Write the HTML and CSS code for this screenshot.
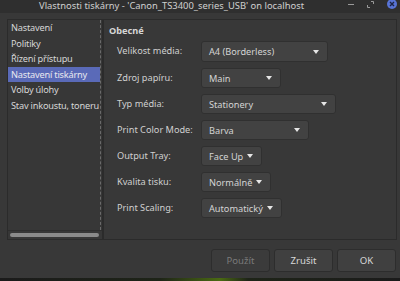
FILE: index.html
```html
<!DOCTYPE html>
<html lang="cs">
<head>
    <meta charset="UTF-8">
    <title>Vlastnosti tiskárny</title>
    <link rel="stylesheet" href="styles.css">
</head>
<body>
    <div class="window">
        <div class="titlebar">
            <div class="title">Vlastnosti tiskárny - 'Canon_TS3400_series_USB' on localhost</div>
            <div class="controls">
                <span class="ctl-min"></span>
                <svg class="ctl-max" width="7" height="7" viewBox="0 0 7 7">
                    <path d="M4 0.5h2.5v2.5M3 6.5H0.5V4" fill="none" stroke="#9a9a9a" stroke-width="1"/>
                </svg>
                <span class="ctl-close">
                    <svg width="6" height="6" viewBox="0 0 6 6">
                        <path d="M1 1L5 5M5 1L1 5" stroke="#1c2447" stroke-width="1.4"/>
                    </svg>
                </span>
            </div>
        </div>

        <div class="main">
            <div class="sidebar">
                <ul class="list">
                    <li>Nastavení</li>
                    <li>Politiky</li>
                    <li>Řízení přístupu</li>
                    <li class="selected">Nastavení tiskárny</li>
                    <li>Volby úlohy</li>
                    <li>Stav inkoustu, toneru</li>
                </ul>
                <div class="hscroll"><div class="thumb"></div></div>
            </div>

            <div class="pane">
                <div class="section">Obecné</div>
                <div class="form">
                    <label>Velikost média:</label>
                    <div class="combo w-a4 first">A4 (Borderless)<span class="arrow"></span></div>

                    <label>Zdroj papíru:</label>
                    <div class="combo w-main">Main<span class="arrow"></span></div>

                    <label>Typ média:</label>
                    <div class="combo w-type">Stationery<span class="arrow"></span></div>

                    <label>Print Color Mode:</label>
                    <div class="combo w-color">Barva<span class="arrow"></span></div>

                    <label>Output Tray:</label>
                    <div class="combo">Face Up<span class="arrow"></span></div>

                    <label>Kvalita tisku:</label>
                    <div class="combo">Normálně<span class="arrow"></span></div>

                    <label>Print Scaling:</label>
                    <div class="combo">Automatický<span class="arrow"></span></div>
                </div>
            </div>
        </div>

        <div class="buttons">
            <button class="btn" disabled>Použít</button>
            <button class="btn">Zrušit</button>
            <button class="btn">OK</button>
        </div>
    </div>
    <div class="desktop"></div>
</body>
</html>
```

FILE: styles.css
```css
* {
    box-sizing: border-box;
}
html, body {
    margin: 0;
    padding: 0;
    width: 400px;
    height: 281px;
    overflow: hidden;
    background: #1d1d1d;
}
body {
    font-family: "Noto Sans", "DejaVu Sans", sans-serif;
    font-size: 9.2px;
    color: #d6d6d6;
}
.window {
    height: 278px;
    background: #383838;
    display: flex;
    flex-direction: column;
}
.titlebar {
    height: 13px;
    background: #2f2f2f;
    display: flex;
    align-items: center;
    padding-left: 39px;
    position: relative;
}
.title {
    font-size: 9.4px;
    color: #cfcfcf;
    white-space: nowrap;
    margin-top: -3px;
}
.controls {
    position: absolute;
    right: 3px;
    top: -1px;
    display: flex;
    align-items: center;
    gap: 13px;
}
.ctl-min {
    width: 6px;
    height: 1px;
    background: #9a9a9a;
}
.ctl-max {
    display: block;
}
.ctl-close {
    width: 10px;
    height: 10px;
    border-radius: 50%;
    background: #5874d6;
    display: flex;
    align-items: center;
    justify-content: center;
}
.ctl-close svg {
    display: block;
}

.main {
    display: flex;
    padding: 6px 3px 0 7px;
    height: 227px;
}
.sidebar {
    width: 96px;
    border: 1px solid #2b2b2b;
    background: #373737;
    display: flex;
    flex-direction: column;
}
.list {
    list-style: none;
    margin: 0;
    padding: 0;
    flex: 1;
    border-right: 1px dashed #6a6a6a;
    margin-right: 1px;
    overflow: hidden;
}
.list li {
    height: 15.5px;
    line-height: 15.5px;
    padding-left: 3px;
    white-space: nowrap;
    letter-spacing: -0.2px;
}
.list li.selected {
    background: #5a6ab8;
    color: #e8e8ef;
}
.hscroll {
    height: 9px;
    border-top: 1px solid #2e2e2e;
    padding: 2px 3px 0 2px;
}
.thumb {
    height: 4px;
    border-radius: 2px;
    background: #8a8a8a;
}

.pane {
    flex: 1;
    border: 1px solid #2b2b2b;
    padding: 3px 0 0 5px;
}
.section {
    font-weight: bold;
    height: 15px;
    line-height: 15px;
}
.form {
    display: grid;
    grid-template-columns: 84px auto;
    row-gap: 6px;
    padding-left: 8px;
    margin-top: 3px;
    justify-items: start;
}
.form label {
    line-height: 20px;
    color: #d0d0d0;
}
.combo {
    height: 20px;
    display: flex;
    align-items: center;
    padding: 0 8px 0 7px;
    background: #424242;
    border: 1px solid #303030;
    border-radius: 3px;
    white-space: nowrap;
    color: #d4d4d4;
}
.combo.first {
    height: 21px;
}
.arrow {
    margin-left: 4px;
    width: 0;
    height: 0;
    border-left: 3.5px solid transparent;
    border-right: 3.5px solid transparent;
    border-top: 4px solid #e6e6e6;
}
.w-a4, .w-main, .w-type, .w-color {
    justify-content: space-between;
}
.w-a4 { width: 127px; }
.w-main { width: 80px; }
.w-type { width: 135px; }
.w-color { width: 108px; }

.buttons {
    display: flex;
    justify-content: flex-end;
    gap: 4px;
    padding: 9px 4px 0 0;
}
.btn {
    width: 59px;
    height: 23px;
    font-family: inherit;
    font-size: 9.6px;
    color: #d8d8d8;
    background: #404040;
    border: 1px solid #2d2d2d;
    border-radius: 3px;
}
.btn:disabled {
    color: #7a7a7a;
    background: #3b3b3b;
}
.desktop {
    height: 3px;
    background: linear-gradient(90deg, #1b1b1b 0%, #1e2418 40%, #4a6a12 55%, #1e2418 62%, #1b1b1b 100%);
}
```
